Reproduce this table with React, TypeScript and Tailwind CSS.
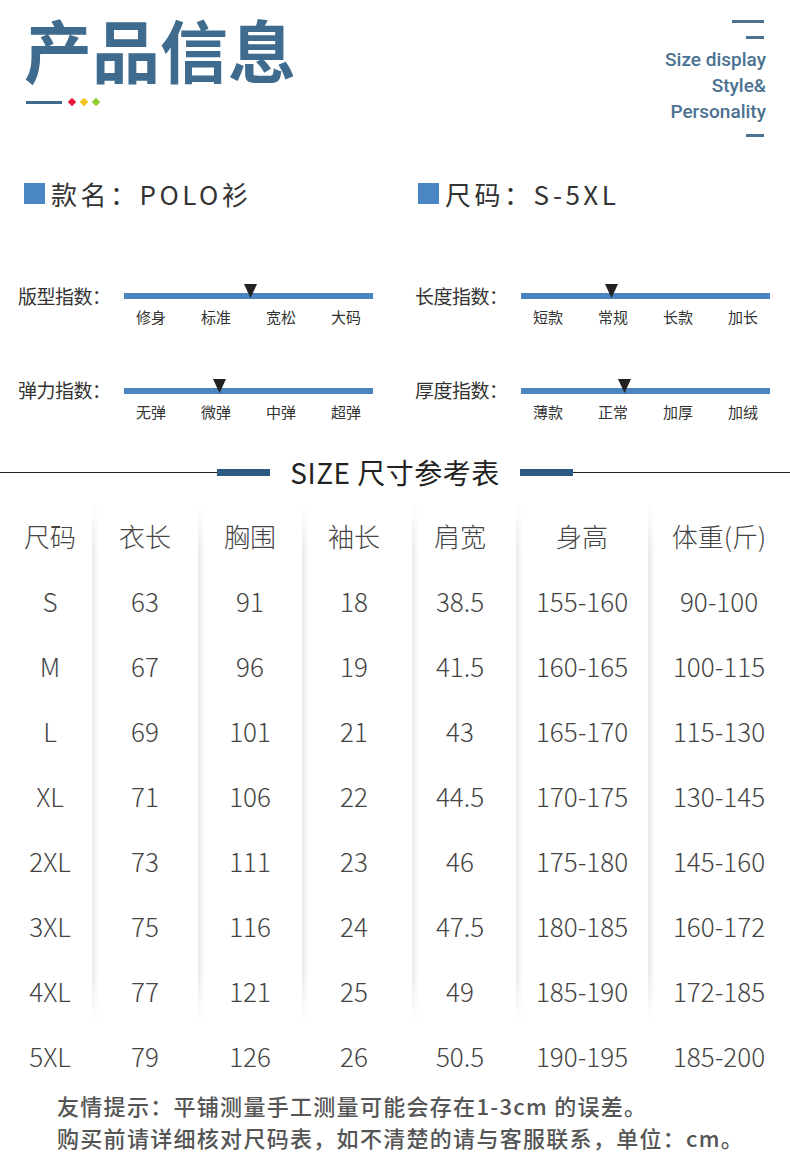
import React from "react";

const cjk = "font-['Noto_Sans_CJK_SC',sans-serif]";

const sliders = [
  [
    { label: "版型指数：", marks: ["修身", "标准", "宽松", "大码"], at: 126 },
    { label: "弹力指数：", marks: ["无弹", "微弹", "中弹", "超弹"], at: 95 },
  ],
  [
    { label: "长度指数：", marks: ["短款", "常规", "长款", "加长"], at: 90 },
    { label: "厚度指数：", marks: ["薄款", "正常", "加厚", "加绒"], at: 103 },
  ],
];

const columns = [
  { w: "w-[92px] pl-[8px]", head: "尺码", shade: false },
  { w: "w-[106px]", head: "衣长", shade: true },
  { w: "w-[104px]", head: "胸围", shade: true },
  { w: "w-[104px]", head: "袖长", shade: true },
  { w: "w-[102px] pl-[6px]", head: "肩宽", shade: true },
  { w: "w-[140px] pl-[8px]", head: "身高", shade: true },
  { w: "w-[142px]", head: "体重(斤)", shade: true },
];

const rows = [
  ["S", "63", "91", "18", "38.5", "155-160", "90-100"],
  ["M", "67", "96", "19", "41.5", "160-165", "100-115"],
  ["L", "69", "101", "21", "43", "165-170", "115-130"],
  ["XL", "71", "106", "22", "44.5", "170-175", "130-145"],
  ["2XL", "73", "111", "23", "46", "175-180", "145-160"],
  ["3XL", "75", "116", "24", "47.5", "180-185", "160-172"],
  ["4XL", "77", "121", "25", "49", "185-190", "172-185"],
  ["5XL", "79", "126", "26", "50.5", "190-195", "185-200"],
];

function Slider({ label, marks, at }: { label: string; marks: string[]; at: number }) {
  return (
    <div className="flex items-start">
      <div className="w-[106px] h-[22px] flex items-center text-[19px] tracking-[-0.5px] text-[#333]">
        {label}
      </div>
      <div className="w-[249px]">
        <div className="relative h-[22px] flex items-center">
          <div className="w-full h-[6px] bg-[#4a85bf]" />
          {/* marker */}
          <svg
            className="absolute top-[-1px]"
            style={{ left: at - 6 }}
            width="13"
            height="14"
            viewBox="0 0 13 14"
          >
            <polygon points="0,0 13,0 6.5,14" fill="#222" />
          </svg>
        </div>
        <div className="flex gap-[34px] pl-[12px] mt-[-1px] text-[15px] text-[#333]">
          {marks.map((m) => (
            <span key={m} className="w-[31px] whitespace-nowrap">
              {m}
            </span>
          ))}
        </div>
      </div>
    </div>
  );
}

export default function App() {
  return (
    <div className={`w-[790px] h-[1163px] bg-white overflow-hidden ${cjk}`}>
      {/* header */}
      <div className="h-[160px] flex justify-between">
        <div className="pl-[24px]">
          <div className="text-[68px] leading-[98px] font-bold text-[#3f6c8e] whitespace-nowrap">
            产品信息
          </div>
          <div className="flex items-center gap-[5px] mt-[1px] pl-[2px]">
            <div className="w-[36px] h-[3px] bg-[#3f6c8e]" />
            <div className="w-[6px] h-[6px] rotate-45 bg-[#e8173e] ml-[2px]" />
            <div className="w-[6px] h-[6px] rotate-45 bg-[#f2c318] ml-[1px]" />
            <div className="w-[6px] h-[6px] rotate-45 bg-[#8fd02c] ml-[1px]" />
          </div>
        </div>
        <div className="pr-[24px] pt-[20px] flex flex-col items-end font-['Roboto',sans-serif] font-medium text-[19px] leading-[26px] text-[#4b7291]">
          <div className="w-[32px] h-[3px] bg-[#4b7291] mr-[2px]" />
          <div className="w-[18px] h-[3px] bg-[#4b7291] mr-[2px] mt-[13px]" />
          <div className="mt-[8px]">Size display</div>
          <div>Style&amp;</div>
          <div>Personality</div>
          <div className="w-[18px] h-[3px] bg-[#4b7291] mr-[2px] mt-[9px]" />
        </div>
      </div>

      {/* name / size */}
      <div className="flex h-[36px] items-center text-[26px] tracking-[3.5px] text-[#333] mt-[15px]">
        <div className="w-[418px] pl-[24px] flex items-center gap-[6px]">
          <span className="w-[21px] h-[21px] bg-[#4a86c4]" />
          <span>款名：POLO衫</span>
        </div>
        <div className="flex items-center gap-[6px]">
          <span className="w-[21px] h-[21px] bg-[#4a86c4]" />
          <span>尺码：S-5XL</span>
        </div>
      </div>

      {/* sliders */}
      <div className="flex mt-[74px]">
        {sliders.map((col, i) => (
          <div key={i} className={`flex flex-col gap-[51px] ${i === 0 ? "pl-[18px] w-[415px]" : ""}`}>
            {col.map((s) => (
              <Slider key={s.label} {...s} />
            ))}
          </div>
        ))}
      </div>

      {/* SIZE title */}
      <div className="flex items-center mt-[29px] h-[40px]">
        <div className="flex-1 h-px bg-[#222]" />
        <div className="w-[53px] h-[7px] bg-[#2c5a82]" />
        <div className="px-[20px] text-[28px] text-[#222] tracking-[0.5px]">SIZE 尺寸参考表</div>
        <div className="w-[53px] h-[7px] bg-[#2c5a82]" />
        <div className="flex-1 h-px bg-[#222]" />
      </div>

      {/* table */}
      <div className="flex mt-[11px] text-[26px] font-light text-[#444]">
        {columns.map((c, ci) => (
          <div key={c.head} className={`${c.w} flex flex-col`}>
            <div
              className={
                c.shade
                  ? "bg-[image:linear-gradient(to_bottom,#fff,rgba(255,255,255,0)_50px,rgba(255,255,255,0)_470px,#fff),linear-gradient(to_right,#e8e8e8,#fff_7px)]"
                  : ""
              }
            >
              <div className="h-[65px] flex items-center justify-center">{c.head}</div>
              {rows.slice(0, 7).map((r) => (
                <div key={r[0]} className="h-[65px] flex items-center justify-center">
                  {r[ci]}
                </div>
              ))}
            </div>
            <div className="h-[65px] flex items-center justify-center">{rows[7][ci]}</div>
          </div>
        ))}
      </div>

      {/* notes */}
      <div className="pl-[57px] mt-[1px] text-[22px] leading-[32px] font-medium text-[#555] tracking-[1.3px]">
        <div>友情提示：平铺测量手工测量可能会存在1-3cm 的误差。</div>
        <div>购买前请详细核对尺码表，如不清楚的请与客服联系，单位：cm。</div>
      </div>
    </div>
  );
}
